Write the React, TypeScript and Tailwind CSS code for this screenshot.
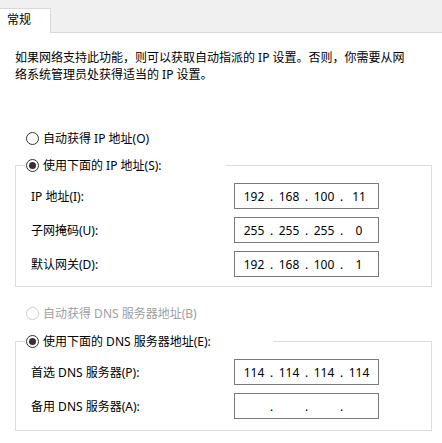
import { Fragment } from "react";

const Radio = ({ checked, disabled }: { checked?: boolean; disabled?: boolean }) => (
  <span
    className={`flex h-[13px] w-[13px] shrink-0 items-center justify-center rounded-full border bg-white ${
      disabled ? "border-[#cccccc]" : "border-[#333333]"
    }`}
  >
    {checked && <span className="h-[7px] w-[7px] rounded-full bg-[#333333]" />}
  </span>
);

const IpBox = ({ parts }: { parts: string[] }) => (
  <div className="flex h-[26px] w-[145px] items-center border border-[#7a7a7a] bg-white pl-[4px]">
    {parts.map((p, i) => (
      <Fragment key={i}>
        <span className="w-[30px] text-center">{p}</span>
        {i < 3 && <span className="w-[5px] text-center">.</span>}
      </Fragment>
    ))}
  </div>
);

const Field = ({ label, parts }: { label: string; parts: string[] }) => (
  <div className="flex items-center">
    <span className="w-[203px]">{label}</span>
    <IpBox parts={parts} />
  </div>
);

const App = () => {
  return (
    <div className="h-[443px] w-[442px] overflow-hidden bg-white font-[family-name:'Noto_Sans','Noto_Sans_CJK_SC',sans-serif] text-[12px] leading-[17px] text-black">
      <div className="flex h-[33px] items-end border-b border-[#d9d9d9] bg-[#f0f0f0]">
        <div className="-mb-px flex h-[25px] w-[51px] items-center border-t border-r border-[#d9d9d9] bg-white pb-[4px] pl-[7px]">
          常规
        </div>
      </div>

      <p className="mt-[16px] pl-[15px]">
        如果网络支持此功能，则可以获取自动指派的 IP 设置。否则，你需要从网
        <br />
        络系统管理员处获得适当的 IP 设置。
      </p>

      <div className="mt-[47px] ml-[26px] flex h-[17px] items-center gap-[4px]">
        <Radio />
        <span>自动获得 IP 地址(O)</span>
      </div>

      <fieldset className="mt-[10px] ml-[15px] w-[417px] border border-[#dcdcdc]">
        <legend className="ml-[9px] flex w-[201px] items-center gap-[4px] pl-[1px]">
          <Radio checked />
          <span>使用下面的 IP 地址(S):</span>
        </legend>
        <div className="flex flex-col gap-[8px] pt-[9px] pb-[9px] pl-[15px]">
          <Field label="IP 地址(I):" parts={["192", "168", "100", "11"]} />
          <Field label="子网掩码(U):" parts={["255", "255", "255", "0"]} />
          <Field label="默认网关(D):" parts={["192", "168", "100", "1"]} />
        </div>
      </fieldset>

      <div className="mt-[18px] ml-[26px] flex h-[17px] items-center gap-[4px] text-[#a0a0a0]">
        <Radio disabled />
        <span>自动获得 DNS 服务器地址(B)</span>
      </div>

      <fieldset className="mt-[11px] ml-[15px] w-[417px] border border-[#dcdcdc]">
        <legend className="ml-[9px] flex w-[248px] items-center gap-[4px] pl-[1px]">
          <Radio checked />
          <span>使用下面的 DNS 服务器地址(E):</span>
        </legend>
        <div className="flex flex-col gap-[8px] pt-[9px] pb-[11px] pl-[15px]">
          <Field label="首选 DNS 服务器(P):" parts={["114", "114", "114", "114"]} />
          <Field label="备用 DNS 服务器(A):" parts={["", "", "", ""]} />
        </div>
      </fieldset>
    </div>
  );
};

export default App;
